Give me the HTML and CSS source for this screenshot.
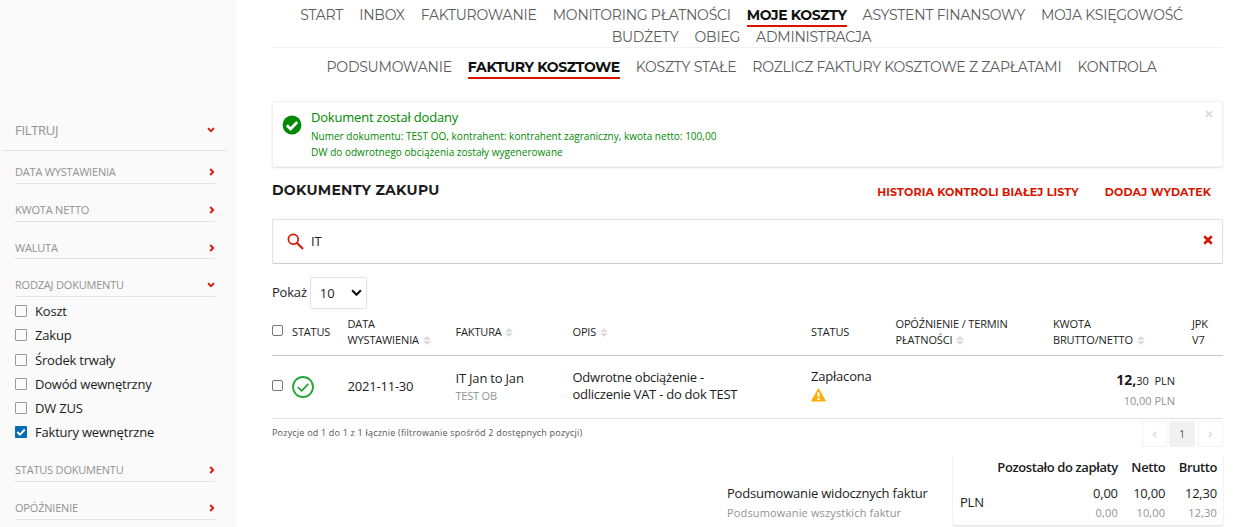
FILE: index.html
```html
<!DOCTYPE html>
<html lang="pl">
<head>
  <meta charset="UTF-8">
  <title>Dokumenty zakupu</title>
  <meta name="viewport" content="width=device-width, initial-scale=1.0">
  <link rel="stylesheet" href="styles.css">
</head>
<body>
  <!-- shared icons -->
  <svg class="sprite" width="0" height="0">
    <symbol id="chevron" viewBox="0 0 8 8"><path d="M2.2 1 5.2 4 2.2 7" fill="none" stroke="currentColor" stroke-width="1.8"/></symbol>
    <symbol id="cross" viewBox="0 0 8 8"><path d="M1 1 7 7M7 1 1 7" fill="none" stroke="currentColor" stroke-width="2.1"/></symbol>
    <symbol id="sort" viewBox="0 0 8 10"><path d="M3.2.5h1.6L7.8 3.5v1H.2v-1zM.2 5.5h7.6v1L4.8 9.5H3.2L.2 6.5z" fill="currentColor"/></symbol>
  </svg>

  <aside class="sidebar">
    <div class="filter-title">FILTRUJ <svg class="chevron down"><use href="#chevron"/></svg></div>
    <div class="filters">
      <div class="filter first">DATA WYSTAWIENIA <svg class="chevron"><use href="#chevron"/></svg></div>
      <div class="filter">KWOTA NETTO <svg class="chevron"><use href="#chevron"/></svg></div>
      <div class="filter">WALUTA <svg class="chevron"><use href="#chevron"/></svg></div>
      <div class="filter">RODZAJ DOKUMENTU <svg class="chevron down"><use href="#chevron"/></svg></div>
      <ul class="options">
        <li><span class="box"></span>Koszt</li>
        <li><span class="box"></span>Zakup</li>
        <li><span class="box"></span>Środek trwały</li>
        <li><span class="box"></span>Dowód wewnętrzny</li>
        <li><span class="box"></span>DW ZUS</li>
        <li><span class="box checked"><svg viewBox="0 0 12 12"><path d="M2.3 6 5 8.6 9.8 3.5" fill="none" stroke="#fff" stroke-width="1.9"/></svg></span>Faktury wewnętrzne</li>
      </ul>
      <div class="filter">STATUS DOKUMENTU <svg class="chevron"><use href="#chevron"/></svg></div>
      <div class="filter">OPÓŹNIENIE <svg class="chevron"><use href="#chevron"/></svg></div>
    </div>
  </aside>

  <main class="content">
    <nav class="nav main-nav">
      <a>START</a>
      <a>INBOX</a>
      <a>FAKTUROWANIE</a>
      <a>MONITORING PŁATNOŚCI</a>
      <a class="active">MOJE KOSZTY</a>
      <a>ASYSTENT FINANSOWY</a>
      <a>MOJA KSIĘGOWOŚĆ</a>
      <a>BUDŻETY</a>
      <a>OBIEG</a>
      <a>ADMINISTRACJA</a>
    </nav>
    <nav class="nav sub-nav">
      <a>PODSUMOWANIE</a>
      <a class="active">FAKTURY KOSZTOWE</a>
      <a>KOSZTY STAŁE</a>
      <a>ROZLICZ FAKTURY KOSZTOWE Z ZAPŁATAMI</a>
      <a>KONTROLA</a>
    </nav>

    <div class="alert">
      <svg class="alert-icon" viewBox="0 0 20 20"><circle cx="10" cy="10" r="9.4" fill="#008a00"/><path d="M4.8 10.3 8.6 14 15.2 7" fill="none" stroke="#fff" stroke-width="2.8"/></svg>
      <div class="alert-text">
        <p class="alert-title">Dokument został dodany</p>
        <p>Numer dokumentu: TEST OO, kontrahent: kontrahent zagraniczny, kwota netto: 100,00</p>
        <p>DW do odwrotnego obciążenia zostały wygenerowane</p>
      </div>
      <svg class="alert-close"><use href="#cross"/></svg>
    </div>

    <header class="heading">
      <h1>DOKUMENTY ZAKUPU</h1>
      <a class="link-history">HISTORIA KONTROLI BIAŁEJ LISTY</a>
      <a class="link-add">DODAJ WYDATEK</a>
    </header>

    <div class="search">
      <svg class="search-icon" viewBox="0 0 17 17"><circle cx="6.3" cy="6.3" r="4.9" fill="none" stroke="currentColor" stroke-width="1.7"/><path d="M9.8 9.8 16 16" stroke="currentColor" stroke-width="2"/></svg>
      <span>IT</span>
      <svg class="search-clear"><use href="#cross"/></svg>
    </div>

    <div class="length">
      <span class="length-label">Pokaż</span>
      <span class="select">10 <svg viewBox="0 0 10 7"><path d="M1 1.2 5 5.2 9 1.2" fill="none" stroke="#111" stroke-width="2"/></svg></span>
    </div>

    <table class="invoices">
      <colgroup>
        <col class="c-check"><col class="c-icon"><col class="c-date"><col class="c-invoice"><col class="c-desc">
        <col class="c-status"><col class="c-delay"><col class="c-amount"><col class="c-jpk">
      </colgroup>
      <thead>
        <tr>
          <th><span class="check"></span></th>
          <th>STATUS</th>
          <th>DATA<br>WYSTAWIENIA <svg class="sort"><use href="#sort"/></svg></th>
          <th>FAKTURA <svg class="sort"><use href="#sort"/></svg></th>
          <th>OPIS <svg class="sort"><use href="#sort"/></svg></th>
          <th>STATUS</th>
          <th>OPÓŹNIENIE / TERMIN<br>PŁATNOŚCI <svg class="sort"><use href="#sort"/></svg></th>
          <th>KWOTA<br>BRUTTO/NETTO <svg class="sort"><use href="#sort"/></svg></th>
          <th>JPK<br>V7</th>
        </tr>
      </thead>
      <tbody>
        <tr>
          <td><span class="check"></span></td>
          <td><svg class="ok" viewBox="0 0 22 22"><circle cx="11" cy="11" r="10" fill="none" stroke="#23a638" stroke-width="1.8"/><path d="M5.8 11.2 9.7 14.8 16.3 7.8" fill="none" stroke="#23a638" stroke-width="1.8"/></svg></td>
          <td>2021-11-30</td>
          <td class="invoice">IT Jan to Jan<small>TEST OB</small></td>
          <td class="desc">Odwrotne obciążenie -<br>odliczenie VAT - do dok TEST</td>
          <td class="state">Zapłacona<svg class="warn" viewBox="0 0 15 14"><path d="M7.5.8 14.5 13H.5z" fill="#fcae0c" stroke="#fcae0c" stroke-linejoin="round"/><path d="M7.5 4.2v4.6M7.5 10v2" stroke="#fff" stroke-width="2"/></svg></td>
          <td></td>
          <td class="amount"><b>12,</b><span class="cents">30&nbsp; PLN</span><small>10,00 PLN</small></td>
          <td></td>
        </tr>
      </tbody>
    </table>

    <div class="table-footer">
      <span class="info">Pozycje od 1 do 1 z 1 łącznie (filtrowanie spośród 2 dostępnych pozycji)</span>
      <div class="pages">
        <span class="page"><svg class="chevron left"><use href="#chevron"/></svg></span>
        <span class="page current">1</span>
        <span class="page"><svg class="chevron"><use href="#chevron"/></svg></span>
      </div>
    </div>

    <div class="summary">
      <div class="summary-labels">
        <div>Podsumowanie widocznych faktur</div>
        <div class="muted">Podsumowanie wszystkich faktur</div>
      </div>
      <div class="summary-card">
        <div class="currency">PLN</div>
        <div class="sum"><b>Pozostało do zapłaty</b><span>0,00</span><span class="muted">0,00</span></div>
        <div class="sum"><b>Netto</b><span>10,00</span><span class="muted">10,00</span></div>
        <div class="sum"><b>Brutto</b><span>12,30</span><span class="muted">12,30</span></div>
      </div>
    </div>
  </main>
</body>
</html>
```
FILE: styles.css
```css
:root {
  --red: #d81400;
  --text: #1c1c1c;
  --muted: #929292;
  --line: #e1e1e1;
  --display: 'Montserrat', 'Inter', sans-serif;
}

* {
  box-sizing: border-box;
}

body {
  display: flex;
  height: 527px;
  margin: 0;
  overflow: hidden;
  font-family: 'Open Sans', sans-serif;
  font-size: 13px;
  line-height: 18px;
  letter-spacing: -0.2px;
  color: var(--text);
  background: #fff;
}

p, h1, ul {
  margin: 0;
  padding: 0;
}

.sprite {
  position: absolute;
}

/* sidebar */

.sidebar {
  flex: none;
  width: 236px;
  padding: 110px 9px 0 2px;
  background: #fafafa;
}

.filter-title,
.filter {
  display: flex;
  align-items: center;
  justify-content: space-between;
  color: var(--muted);
  border-bottom: 1px solid var(--line);
}

.filter-title {
  height: 41px;
  padding: 0 12px 0 13px;
  letter-spacing: -0.3px;
}

.filters {
  padding: 0 12px 0 13px;
}

.filter {
  height: 37.7px;
  padding-top: 15px;
  font-size: 11px;
  letter-spacing: -0.2px;
}

.filter.first {
  height: 33px;
  padding-top: 9px;
}

.chevron {
  width: 8px;
  height: 8px;
  color: var(--red);
}

.filter .chevron {
  margin-right: -1px;
}

.chevron.down {
  transform: rotate(90deg);
}

.filter .chevron.down {
  margin-right: 0;
}

.chevron.left {
  transform: rotate(180deg);
}

.options {
  padding: 2px 0 0;
  list-style: none;
}

.options li {
  display: flex;
  align-items: center;
  height: 24.2px;
}

.box {
  width: 12px;
  height: 12px;
  margin-right: 8px;
  border: 1px solid #999;
  border-radius: 1px;
}

.box.checked {
  border: 0;
  background: #006db3;
}

.box svg {
  display: block;
}

/* navigation */

.content {
  width: 951px;
  margin-left: 36px;
}

.nav {
  display: flex;
  flex-wrap: wrap;
  justify-content: center;
  column-gap: 16px;
  font-family: var(--display);
  font-size: 14px;
  letter-spacing: -0.22px;
  color: #5c5c5c;
}

.nav a {
  height: 22px;
  line-height: 20px;
}

.nav .active {
  font-weight: 700;
  letter-spacing: -0.36px;
  color: #111;
  border-bottom: 2px solid var(--red);
}

.main-nav {
  height: 48px;
  padding: 5px 22px 0 10px;
  align-content: flex-start;
  border-bottom: 1px solid #f1f1f1;
}

.sub-nav {
  height: 53px;
  padding: 9px 12px 0 0;
}

/* alert */

.alert {
  display: flex;
  height: 66px;
  padding: 6px 9px 0 10px;
  color: #008a00;
  border: 1px solid #f2f2f2;
  border-radius: 2px;
  box-shadow: 0 1px 2px rgba(0, 0, 0, 0.12);
}

.alert-icon {
  width: 20px;
  height: 20px;
  margin: 7px 9px 0 -1px;
}

.alert-text {
  flex: 1;
  font-size: 10px;
  line-height: 16px;
  letter-spacing: 0.02px;
}

.alert-title {
  font-size: 13px;
  line-height: 19px;
  letter-spacing: -0.2px;
  margin-bottom: 1px;
}

.alert-close {
  width: 8px;
  height: 8px;
  margin-top: 2px;
  color: #ddd;
}

/* heading */

.heading {
  display: flex;
  align-items: center;
  height: 52px;
  padding: 0 12px 6px 0;
  font-family: var(--display);
  letter-spacing: 0.15px;
}

.heading h1 {
  flex: 1;
  font-size: 14px;
  letter-spacing: 0.28px;
}

.heading a {
  padding-top: 4px;
  font-size: 11px;
  font-weight: 700;
  color: var(--red);
}

.link-history {
  margin-right: 26px;
}

/* search */

.search {
  display: flex;
  align-items: center;
  height: 45px;
  padding: 0 9px 0 15px;
  border: 1px solid var(--line);
  border-bottom-color: #ccc;
  border-radius: 2px;
}

.search-icon {
  width: 17px;
  height: 17px;
  margin: 0 7px 0 -1px;
  color: var(--red);
}

.search span {
  flex: 1;
  padding-bottom: 2px;
}

.search-clear {
  width: 10px;
  height: 10px;
  margin-bottom: 3px;
  color: var(--red);
}

.length {
  display: flex;
  align-items: center;
  height: 32px;
  margin-top: 13px;
}

.length-label {
  padding-bottom: 2px;
}

.select {
  display: flex;
  align-items: center;
  justify-content: space-between;
  width: 57px;
  height: 32px;
  margin-left: 3px;
  padding: 0 4px 1px 9px;
  letter-spacing: 0;
  border: 1px solid var(--line);
  border-radius: 2px;
}

.select svg {
  width: 11px;
}

/* invoices table */

.invoices {
  width: 951px;
  margin-top: 2px;
  table-layout: fixed;
  border-collapse: separate;
  border-spacing: 0;
}

.c-check { width: 20px; }
.c-icon { width: 55.5px; }
.c-date { width: 108px; }
.c-invoice { width: 117px; }
.c-desc { width: 238.5px; }
.c-status { width: 84.5px; }
.c-delay { width: 157.5px; }
.c-amount { width: 139px; }
.c-jpk { width: 31px; }

.invoices th,
.invoices td {
  padding: 0;
  text-align: left;
  vertical-align: middle;
  white-space: nowrap;
}

.invoices th {
  height: 45px;
  padding-bottom: 2px;
  font-size: 11px;
  font-weight: 400;
  line-height: 16px;
  letter-spacing: -0.15px;
  border-bottom: 1px solid #c4c4c4;
}

.invoices td {
  height: 63px;
  padding-bottom: 2px;
  line-height: 17px;
  border-bottom: 1px solid var(--line);
}

.invoices .invoice {
  padding-bottom: 0;
}

.invoices .desc {
  letter-spacing: -0.25px;
}

.invoices .state {
  padding-bottom: 4px;
}

.check {
  display: block;
  width: 11px;
  height: 11px;
  margin-top: -2px;
  border: 1px solid #767676;
  border-radius: 2px;
}

th .check {
  margin-top: -3px;
}

.sort {
  width: 8px;
  height: 9px;
  margin-left: 1px;
  vertical-align: -1px;
  color: #ddd;
}

.ok {
  display: block;
  width: 22px;
  height: 22px;
  margin-top: 2px;
}

.warn {
  display: block;
  width: 15px;
  height: 14px;
  margin-top: 3px;
}

.invoices small {
  display: block;
  font-size: 11px;
  color: var(--muted);
}

.invoices .amount {
  padding: 5px 17px 0 0;
  letter-spacing: -0.03px;
  text-align: right;
}

.amount b {
  font-size: 14px;
}

.amount .cents {
  font-size: 11px;
}

.amount small {
  margin-top: 3px;
}

.table-footer {
  display: flex;
  justify-content: space-between;
  height: 35px;
  color: #555;
}

.info {
  font-size: 9px;
  line-height: 28px;
  letter-spacing: 0.2px;
}

.pages {
  display: flex;
  gap: 2px;
  padding-top: 2px;
}

.page {
  display: flex;
  align-items: center;
  justify-content: center;
  width: 25px;
  height: 26px;
  font-size: 10px;
  border: 1px solid #f1f1f1;
  border-radius: 2px;
}

.page.current {
  width: 26px;
  margin-right: 1px;
  background: #f1f1f1;
}

.page .chevron {
  width: 7px;
  height: 7px;
  color: #ddd;
}

/* totals */

.summary {
  display: flex;
  justify-content: flex-end;
}

.muted {
  font-size: 11px;
  letter-spacing: 0.15px;
  color: var(--muted);
}

.summary-labels {
  width: 226px;
  padding-top: 29px;
  line-height: 20px;
}

.summary-card {
  display: flex;
  width: 270px;
  height: 71px;
  padding: 3px 8px 0 7px;
  box-shadow: 0 1px 2px rgba(0, 0, 0, 0.15);
}

.currency {
  flex: 1;
  padding-top: 36px;
}

.sum {
  display: flex;
  flex-direction: column;
  margin-left: 13.5px;
  text-align: right;
  line-height: 20px;
  white-space: nowrap;
}

.sum b {
  height: 26px;
  font-weight: 600;
  letter-spacing: -0.4px;
}
```
